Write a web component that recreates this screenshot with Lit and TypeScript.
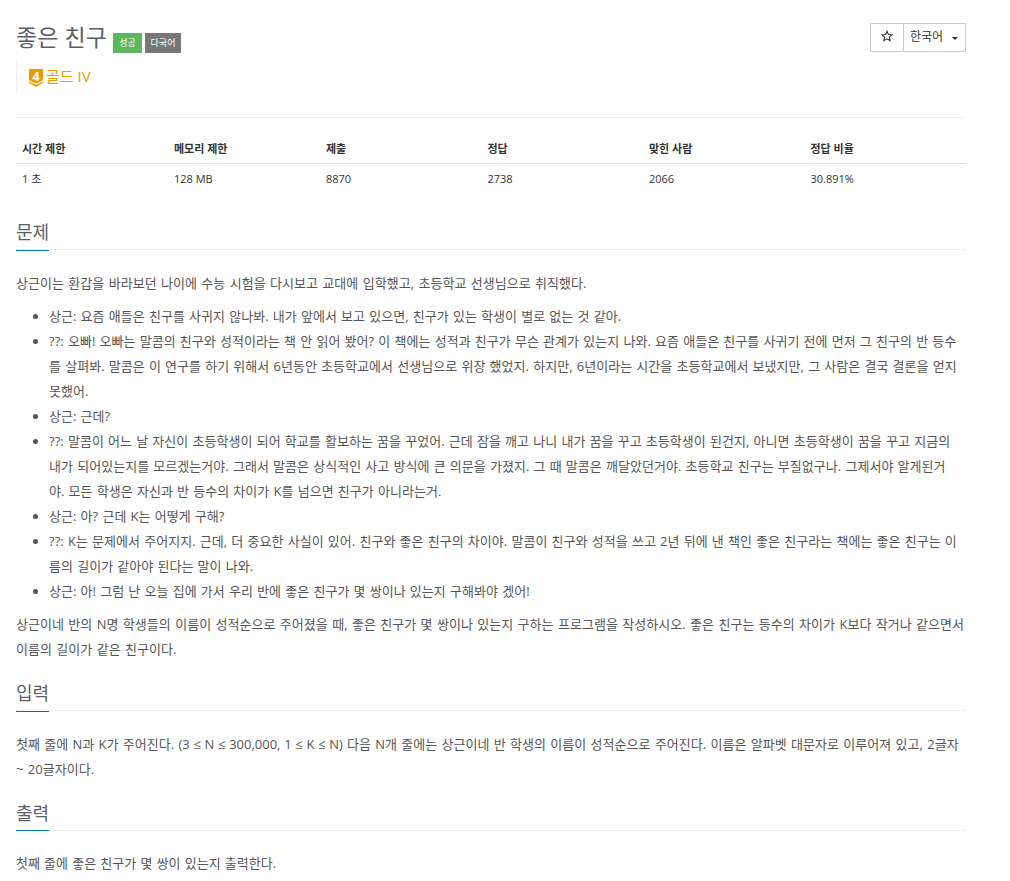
import { LitElement, html, css } from "lit";
import { customElement, property } from "lit/decorators.js";

const stats = [
    { label: "시간 제한", value: "1 초" },
    { label: "메모리 제한", value: "128 MB" },
    { label: "제출", value: "8870" },
    { label: "정답", value: "2738" },
    { label: "맞힌 사람", value: "2066" },
    { label: "정답 비율", value: "30.891%" },
];

const dialog = [
    "상근: 요즘 애들은 친구를 사귀지 않나봐. 내가 앞에서 보고 있으면, 친구가 있는 학생이 별로 없는 것 같아.",
    "??: 오빠! 오빠는 말콤의 친구와 성적이라는 책 안 읽어 봤어? 이 책에는 성적과 친구가 무슨 관계가 있는지 나와. 요즘 애들은 친구를 사귀기 전에 먼저 그 친구의 반 등수\n를 살펴봐. 말콤은 이 연구를 하기 위해서 6년동안 초등학교에서 선생님으로 위장 했었지. 하지만, 6년이라는 시간을 초등학교에서 보냈지만, 그 사람은 결국 결론을 얻지\n못했어.",
    "상근: 근데?",
    "??: 말콤이 어느 날 자신이 초등학생이 되어 학교를 활보하는 꿈을 꾸었어. 근데 잠을 깨고 나니 내가 꿈을 꾸고 초등학생이 된건지, 아니면 초등학생이 꿈을 꾸고 지금의\n내가 되어있는지를 모르겠는거야. 그래서 말콤은 상식적인 사고 방식에 큰 의문을 가졌지. 그 때 말콤은 깨달았던거야. 초등학교 친구는 부질없구나. 그제서야 알게된거\n야. 모든 학생은 자신과 반 등수의 차이가 K를 넘으면 친구가 아니라는거.",
    "상근: 아? 근데 K는 어떻게 구해?",
    "??: K는 문제에서 주어지지. 근데, 더 중요한 사실이 있어. 친구와 좋은 친구의 차이야. 말콤이 친구와 성적을 쓰고 2년 뒤에 낸 책인 좋은 친구라는 책에는 좋은 친구는 이\n름의 길이가 같아야 된다는 말이 나와.",
    "상근: 아! 그럼 난 오늘 집에 가서 우리 반에 좋은 친구가 몇 쌍이나 있는지 구해봐야 겠어!",
];

@customElement("problem-section")
export class ProblemSection extends LitElement {
    @property() heading = "";

    static styles = css`
    :host {
        display: block;
    }

    .headline {
        display: flex;
        height: 38px;
        border-bottom: 1px dotted #ddd;
        margin-bottom: var(--body-gap, 21px);
    }

    .title {
        height: var(--title-height, 39px);
        margin: 0;
        border-bottom: 1px solid #0076c0;
        color: #585f69;
        font-size: 18px;
        font-weight: 400;
        line-height: 42px;
        letter-spacing: 0;
    }
    `

    render() {
        return html`
        <div class="headline"><h2 class="title">${this.heading}</h2></div>
        <slot></slot>
        `
    }
}

@customElement("tier-badge")
export class TierBadge extends LitElement {
    static styles = css`
    :host {
        display: block;
        width: 14px;
        height: 18px;
    }

    .icon {
        display: block;
        overflow: visible;
    }

    .level {
        font: 700 13px "Open Sans", sans-serif;
        fill: #fff;
    }
    `

    render() {
        return html`
        <svg class="icon" width="14" height="18" viewBox="0 0 14 18">
            <path d="M0 0H14V11.6L7 14.7L0 11.6Z" fill="#ec9a00" />
            <path d="M0 12.2L7 15.3L14 12.2V14L7 17.8L0 14Z" fill="#ec9a00" />
            <path d="M0 12.1L7 15.2L14 12.1" fill="none" stroke="#fff" stroke-width="1" />
            <text class="level" x="7" y="11.5" text-anchor="middle">4</text>
        </svg>
        `
    }
}

@customElement("app-root")
export class AppRoot extends LitElement {
    static styles = css`
    :host {
        display: block;
        height: 881px;
        overflow: hidden;
        background: #fff;
        color: #555;
        font-family: "Open Sans", "Noto Sans CJK KR", sans-serif;
        font-size: 13px;
    }

    .page {
        width: 950px;
        padding: 23px 0 0 16px;
    }

    .top {
        display: flex;
        justify-content: space-between;
        align-items: flex-start;
        height: 38px;
    }

    .name {
        display: flex;
        align-items: flex-start;
    }

    .name-text {
        width: 97px;
        margin: 0;
        color: #585f69;
        font-size: 23px;
        font-weight: 400;
        line-height: 29px;
        letter-spacing: 0.1px;
        white-space: nowrap;
    }

    .label {
        width: 36px;
        height: 20px;
        margin: 10px 3px 0 0;
        color: #fff;
        font-size: 9px;
        line-height: 20px;
        text-align: center;
        background: #777;
    }

    .success {
        width: 29px;
        background: #5cb85c;
    }

    .buttons {
        display: flex;
        box-sizing: border-box;
        height: 29px;
        border: 1px solid #ccc;
        color: #333;
        font-size: 12px;
        line-height: 26px;
    }

    .star {
        display: flex;
        justify-content: center;
        width: 32px;
        padding-top: 6px;
        border-right: 1px solid #ccc;
    }

    .language {
        display: flex;
        align-items: center;
        width: 61px;
        height: 26px;
    }

    .language-text {
        padding: 0 9px 0 6px;
    }

    .caret {
        margin-top: 3px;
        border-top: 3px solid #333;
        border-left: 3px solid transparent;
        border-right: 3px solid transparent;
    }

    .tier {
        display: flex;
        align-items: center;
        height: 32px;
        padding-left: 12px;
        gap: 3px;
        border-left: 1px solid #eee;
        color: #ec9a00;
        font-size: 15px;
        line-height: 28px;
    }

    .badge {
        margin-top: 2px;
    }

    .tier-name {
        padding-bottom: 3px;
    }

    .line {
        height: 1px;
        margin: 24px 0 15px;
        background: #eee;
    }

    .stats {
        width: 100%;
        border-collapse: separate;
        border-spacing: 0;
        table-layout: fixed;
        color: #333;
        font-size: 11px;
        line-height: 15px;
        text-align: left;
    }

    .head,
    .cell {
        box-sizing: border-box;
        width: 17%;
        height: 30px;
        padding: 0 6px 2px;
    }

    .head {
        height: 31px;
        padding-bottom: 0;
        border-bottom: 1px solid #ddd;
        font-weight: 700;
    }

    .narrow {
        width: 16%;
    }

    .section {
        padding-top: 2px;
        letter-spacing: 0.04px;
        word-spacing: 0.83px;
    }

    .first {
        padding-top: 17px;
        word-spacing: 0.92px;
    }

    .last {
        word-spacing: 0.7px;
        --title-height: 38px;
        --body-gap: 20px;
    }

    .text {
        margin: 0 0 8px;
        line-height: 25px;
    }

    .range {
        letter-spacing: 0;
        word-spacing: 0.3px;
    }

    .dialog {
        margin: 0 0 8px;
        padding-left: 33px;
        line-height: 25px;
        word-spacing: 0.73px;
        white-space: pre-line;
    }
    `

    render() {
        return html`
        <main class="page">
            <header class="top">
                <div class="name">
                    <h1 class="name-text">좋은 친구</h1>
                    <span class="label success">성공</span>
                    <span class="label">다국어</span>
                </div>
                <div class="buttons">
                    <span class="star">
                        <svg width="12" height="12" viewBox="0 0 12 12">
                            <path d="M6 1.2L7.4 4.5L11 4.8L8.3 7.1L9.2 10.7L6 8.8L2.8 10.7L3.7 7.1L1 4.8L4.6 4.5Z" fill="none" stroke="#333" stroke-width="1.1" />
                        </svg>
                    </span>
                    <span class="language"><span class="language-text">한국어</span><i class="caret"></i></span>
                </div>
            </header>
            <div class="tier"><tier-badge class="badge"></tier-badge><span class="tier-name">골드 IV</span></div>
            <div class="line"></div>
            <table class="stats">
                <thead>
                    <tr>${stats.map((s, i) => html`<th class="head ${i < 2 ? "narrow" : ""}">${s.label}</th>`)}</tr>
                </thead>
                <tbody>
                    <tr>${stats.map((s) => html`<td class="cell">${s.value}</td>`)}</tr>
                </tbody>
            </table>
            <problem-section class="section first" heading="문제">
                <p class="text">상근이는 환갑을 바라보던 나이에 수능 시험을 다시보고 교대에 입학했고, 초등학교 선생님으로 취직했다.</p>
                <ul class="dialog">${dialog.map((d) => html`<li>${d}</li>`)}</ul>
                <p class="text">상근이네 반의 N명 학생들의 이름이 성적순으로 주어졌을 때, 좋은 친구가 몇 쌍이나 있는지 구하는 프로그램을 작성하시오. 좋은 친구는 등수의 차이가 K보다 작거나 같으면서 이름의 길이가 같은 친구이다.</p>
            </problem-section>
            <problem-section class="section" heading="입력">
                <p class="text">첫째 줄에 N과 K가 주어진다. <span class="range">(3 ≤ N ≤ 300,000, 1 ≤ K ≤ N)</span> 다음 N개 줄에는 상근이네 반 학생의 이름이 성적순으로 주어진다. 이름은 알파벳 대문자로 이루어져 있고, 2글자 ~ 20글자이다.</p>
            </problem-section>
            <problem-section class="section last" heading="출력">
                <p class="text">첫째 줄에 좋은 친구가 몇 쌍이 있는지 출력한다.</p>
            </problem-section>
        </main>
        `
    }
}
